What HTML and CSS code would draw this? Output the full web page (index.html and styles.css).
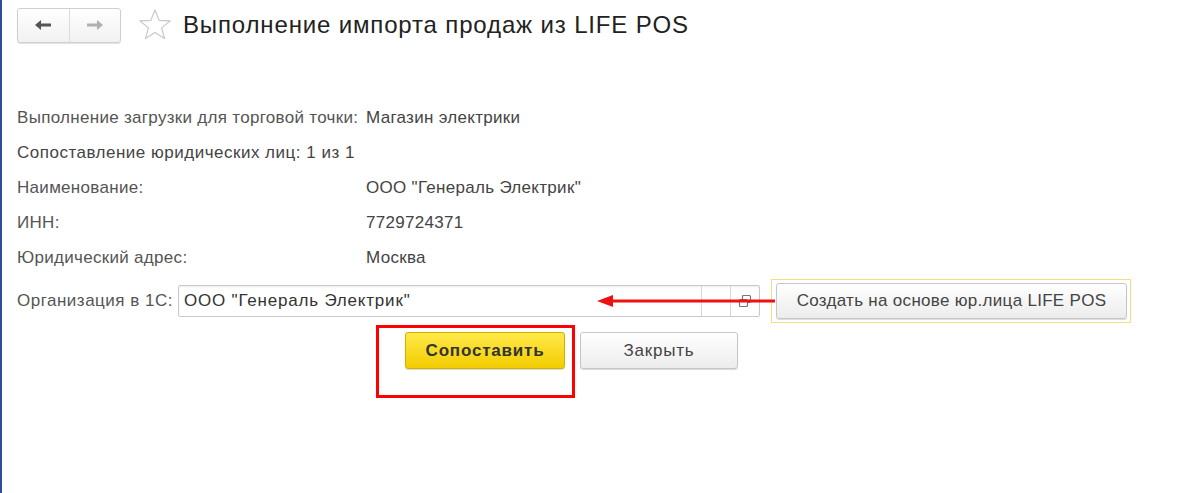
FILE: index.html
```html
<!DOCTYPE html>
<html lang="ru">
<head>
<meta charset="utf-8">
<title>Выполнение импорта продаж из LIFE POS</title>
<link rel="stylesheet" href="styles.css">
</head>
<body>
<div class="page">
  <header class="header">
    <div class="nav">
      <button class="nav-btn back" aria-label="Назад">
        <svg width="18" height="12" viewBox="0 0 18 12"><path d="M1 6 L7 1 L7 4.5 L17 4.5 L17 7.5 L7 7.5 L7 11 Z" fill="#555"/></svg>
      </button>
      <button class="nav-btn fwd" aria-label="Вперёд">
        <svg width="18" height="12" viewBox="0 0 18 12"><path d="M17 6 L11 1 L11 4.5 L1 4.5 L1 7.5 L11 7.5 L11 11 Z" fill="#b0b0b0"/></svg>
      </button>
    </div>
    <svg class="star" width="34" height="34" viewBox="0 0 34 34"><path d="M17 2 L21.2 12.4 L32.2 12.9 L23.6 19.9 L26.5 30.6 L17 24.5 L7.5 30.6 L10.4 19.9 L1.8 12.9 L12.8 12.4 Z" fill="none" stroke="#c8c8c8" stroke-width="1.2" stroke-linejoin="round"/></svg>
    <h1 class="title">Выполнение импорта продаж из LIFE POS</h1>
  </header>

  <main class="form">
    <div class="row"><span class="label">Выполнение загрузки для торговой точки:</span><span class="value">Магазин электрики</span></div>
    <div class="row"><span class="label wide">Сопоставление юридических лиц: 1 из 1</span></div>
    <div class="row"><span class="label">Наименование:</span><span class="value">ООО "Генераль Электрик"</span></div>
    <div class="row"><span class="label">ИНН:</span><span class="value">7729724371</span></div>
    <div class="row"><span class="label">Юридический адрес:</span><span class="value">Москва</span></div>

    <div class="field-row">
      <span class="field-label">Организация в 1С:</span>
      <div class="input">
        <span class="input-text">ООО "Генераль Электрик"</span>
        <span class="input-btn"></span>
        <span class="input-btn open">
          <svg width="14" height="14" viewBox="0 0 14 14"><rect x="4.5" y="1.5" width="8" height="7" rx="1" fill="none" stroke="#777" stroke-width="1.2"/><rect x="1.5" y="5.5" width="8" height="7" rx="1" fill="#fff" stroke="#777" stroke-width="1.2"/></svg>
        </span>
      </div>
      <div class="create-wrap"><button class="btn create">Создать на основе юр.лица LIFE POS</button></div>
      <svg class="arrow" width="178" height="14" viewBox="0 0 178 14"><path d="M0 7 L16 1 L16 5.5 L178 5.5 L178 8.5 L16 8.5 L16 13 Z" fill="#ee1111"/></svg>
    </div>

    <div class="actions">
      <button class="btn primary">Сопоставить</button>
      <button class="btn">Закрыть</button>
      <div class="highlight"></div>
    </div>
  </main>
</div>
</body>
</html>
```

FILE: styles.css
```css
* { box-sizing: border-box; }
html, body { margin: 0; padding: 0; background: #fff; }
body {
  font-family: "Liberation Sans", Arial, sans-serif;
  color: #444;
  width: 1204px;
  height: 493px;
  overflow: hidden;
}
.page {
  height: 493px;
  border-left: 2px solid #2b4f98;
}
.header {
  display: flex;
  align-items: center;
  padding: 7px 0 0 15px;
  height: 43px;
}
.nav {
  display: flex;
  width: 104px;
  height: 35px;
  border: 1px solid #cfcfcf;
  border-radius: 3px;
  background: linear-gradient(#ffffff, #f1f1f1);
  box-shadow: 0 1px 1px rgba(0,0,0,0.12);
}
.nav-btn {
  flex: 1;
  border: 0;
  background: transparent;
  display: flex;
  align-items: center;
  justify-content: center;
  padding: 0;
}
.nav-btn.back { border-right: 1px solid #dcdcdc; }
.star { margin-left: 17px; }
.title {
  margin: 0 0 0 11px;
  font-weight: normal;
  font-size: 24px;
  letter-spacing: 0.85px;
  color: #222;
}
.form {
  padding: 57px 0 0 15px;
  position: relative;
}
.row {
  display: flex;
  align-items: center;
  height: 35px;
  font-size: 17px;
  letter-spacing: 0.3px;
}
.label { width: 349px; color: #555; flex-shrink: 0; white-space: nowrap; }
.label.wide { width: auto; color: #444; letter-spacing: 0.5px; }
.value { color: #444; }
.field-row {
  display: flex;
  align-items: center;
  margin-top: 4px;
  height: 44px;
  position: relative;
}
.field-label { font-size: 17px; letter-spacing: 0.5px; color: #555; width: 161px; white-space: nowrap; }
.input {
  display: flex;
  width: 582px;
  height: 32px;
  border: 1px solid #c9c9c9;
  border-radius: 2px;
  box-shadow: inset 0 1px 2px rgba(0,0,0,0.08);
  font-size: 17px;
  letter-spacing: 0.8px;
}
.input-text { flex: 1; padding: 5px 5px; color: #333; white-space: nowrap; }
.input-btn {
  width: 29px;
  border-left: 1px solid #d6d6d6;
  display: flex;
  align-items: center;
  justify-content: center;
}
.create-wrap {
  margin-left: 11px;
  padding: 3px 3px 3px 4px;
  border: 1px solid #f6dd80;
}
.btn {
  font-family: "Liberation Sans", Arial, sans-serif;
  font-size: 17px;
  letter-spacing: 0.8px;
  color: #444;
  border: 1px solid #c6c6c6;
  border-radius: 3px;
  background: linear-gradient(#ffffff, #ececec);
  box-shadow: 0 1px 1px rgba(0,0,0,0.15);
  height: 37px;
  padding: 0;
  white-space: nowrap;
}
.create { width: 351px; height: 36px; letter-spacing: 0.3px; }
.arrow { position: absolute; left: 580px; top: 15px; }
.actions {
  display: flex;
  margin-top: 9px;
  padding-left: 388px;
  gap: 15px;
  position: relative;
}
.btn.primary {
  width: 160px;
  font-weight: bold;
  color: #333;
  background: linear-gradient(#ffe94a, #f3cc00);
  border-color: #d2b000;
}
.actions .btn:nth-child(2) { width: 158px; }
.highlight {
  position: absolute;
  left: 359px;
  top: -7px;
  width: 199px;
  height: 73px;
  border: 3px solid #ff0000;
}
```
